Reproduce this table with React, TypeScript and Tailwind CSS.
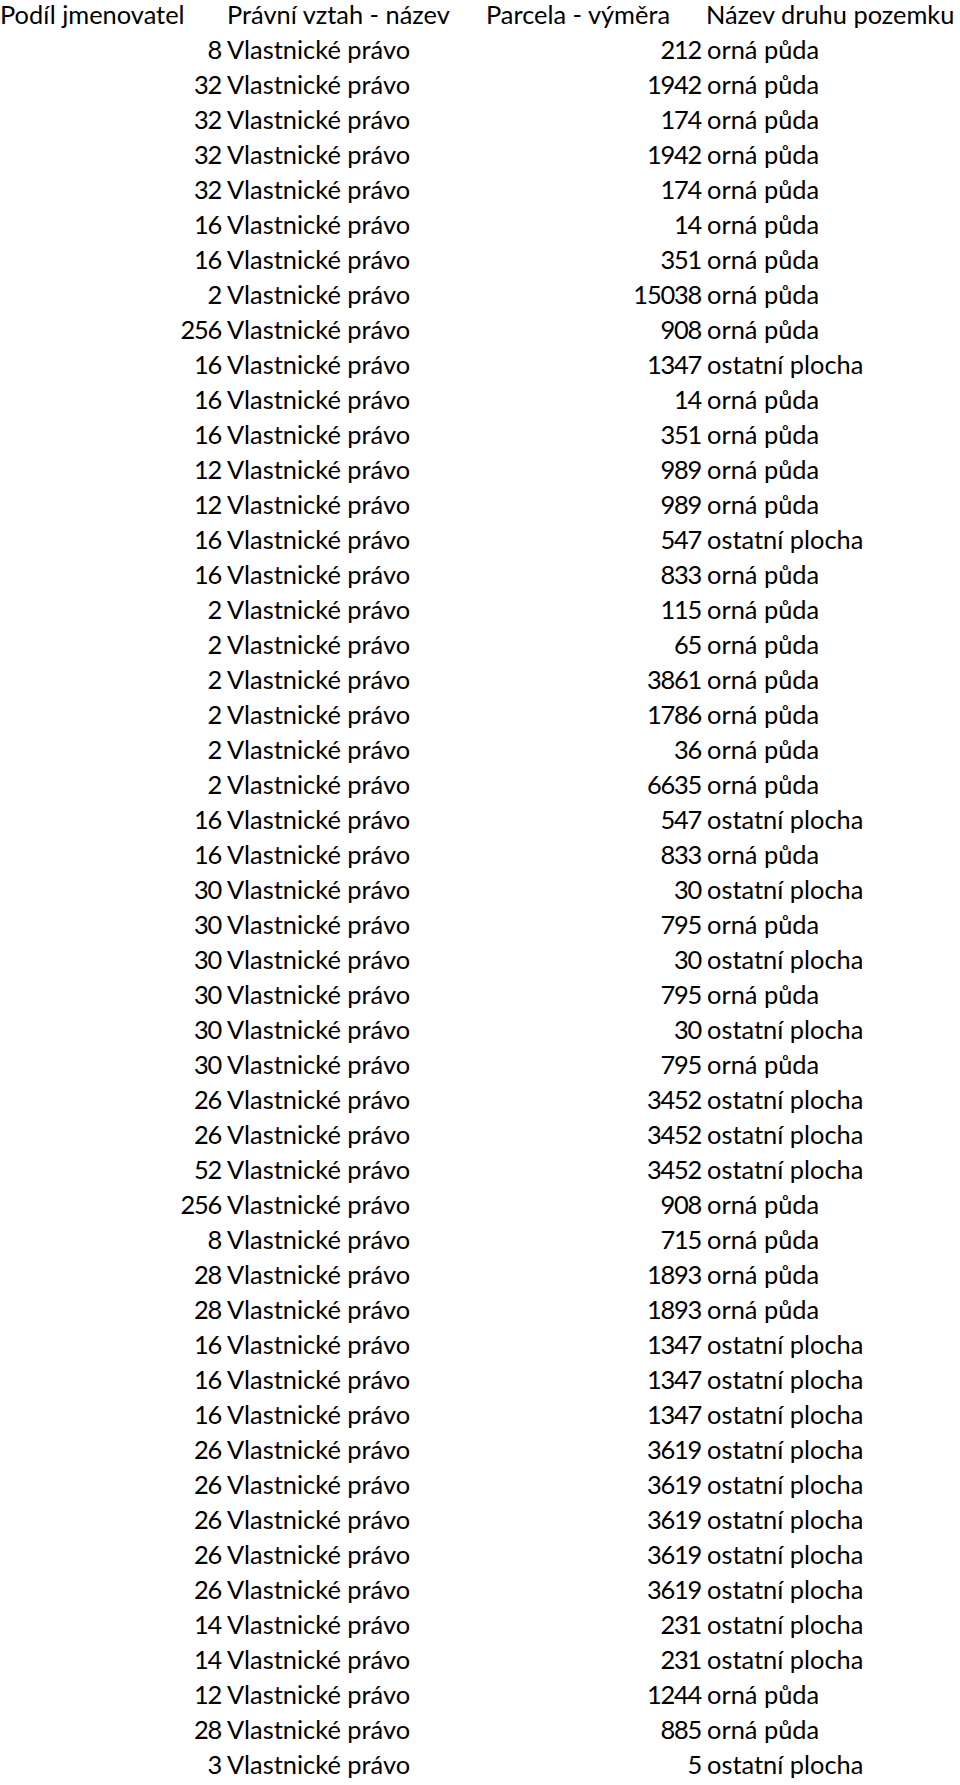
type Row = [number, number, string];

const OR = "orná půda";
const OP = "ostatní plocha";

const rows: Row[] = [
  [8, 212, OR],
  [32, 1942, OR],
  [32, 174, OR],
  [32, 1942, OR],
  [32, 174, OR],
  [16, 14, OR],
  [16, 351, OR],
  [2, 15038, OR],
  [256, 908, OR],
  [16, 1347, OP],
  [16, 14, OR],
  [16, 351, OR],
  [12, 989, OR],
  [12, 989, OR],
  [16, 547, OP],
  [16, 833, OR],
  [2, 115, OR],
  [2, 65, OR],
  [2, 3861, OR],
  [2, 1786, OR],
  [2, 36, OR],
  [2, 6635, OR],
  [16, 547, OP],
  [16, 833, OR],
  [30, 30, OP],
  [30, 795, OR],
  [30, 30, OP],
  [30, 795, OR],
  [30, 30, OP],
  [30, 795, OR],
  [26, 3452, OP],
  [26, 3452, OP],
  [52, 3452, OP],
  [256, 908, OR],
  [8, 715, OR],
  [28, 1893, OR],
  [28, 1893, OR],
  [16, 1347, OP],
  [16, 1347, OP],
  [16, 1347, OP],
  [26, 3619, OP],
  [26, 3619, OP],
  [26, 3619, OP],
  [26, 3619, OP],
  [26, 3619, OP],
  [14, 231, OP],
  [14, 231, OP],
  [12, 1244, OR],
  [28, 885, OR],
  [3, 5, OP],
];

const rowClass = "grid h-[35px] grid-cols-[225px_257px_223px_1fr] whitespace-nowrap leading-[29px]";

export default function App() {
  return (
    <div className="min-h-screen bg-white font-['Lato',sans-serif] text-[25.4px] text-black">
      <div className={rowClass}>
        <div>Podíl jmenovatel</div>
        <div className="pl-[2px]">Právní vztah - název</div>
        <div className="pl-[4px]">Parcela - výměra</div>
        <div className="pl-[1px]">Název druhu pozemku</div>
      </div>
      {rows.map(([share, area, kind], i) => (
        <div key={i} className={rowClass}>
          <div className="pr-[4px] text-right tracking-[-1.2px]">{share}</div>
          <div className="pl-[2px]">Vlastnické právo</div>
          <div className="pr-[4px] text-right tracking-[-1.2px]">{area}</div>
          <div className="pl-[2px]">{kind}</div>
        </div>
      ))}
    </div>
  );
}
